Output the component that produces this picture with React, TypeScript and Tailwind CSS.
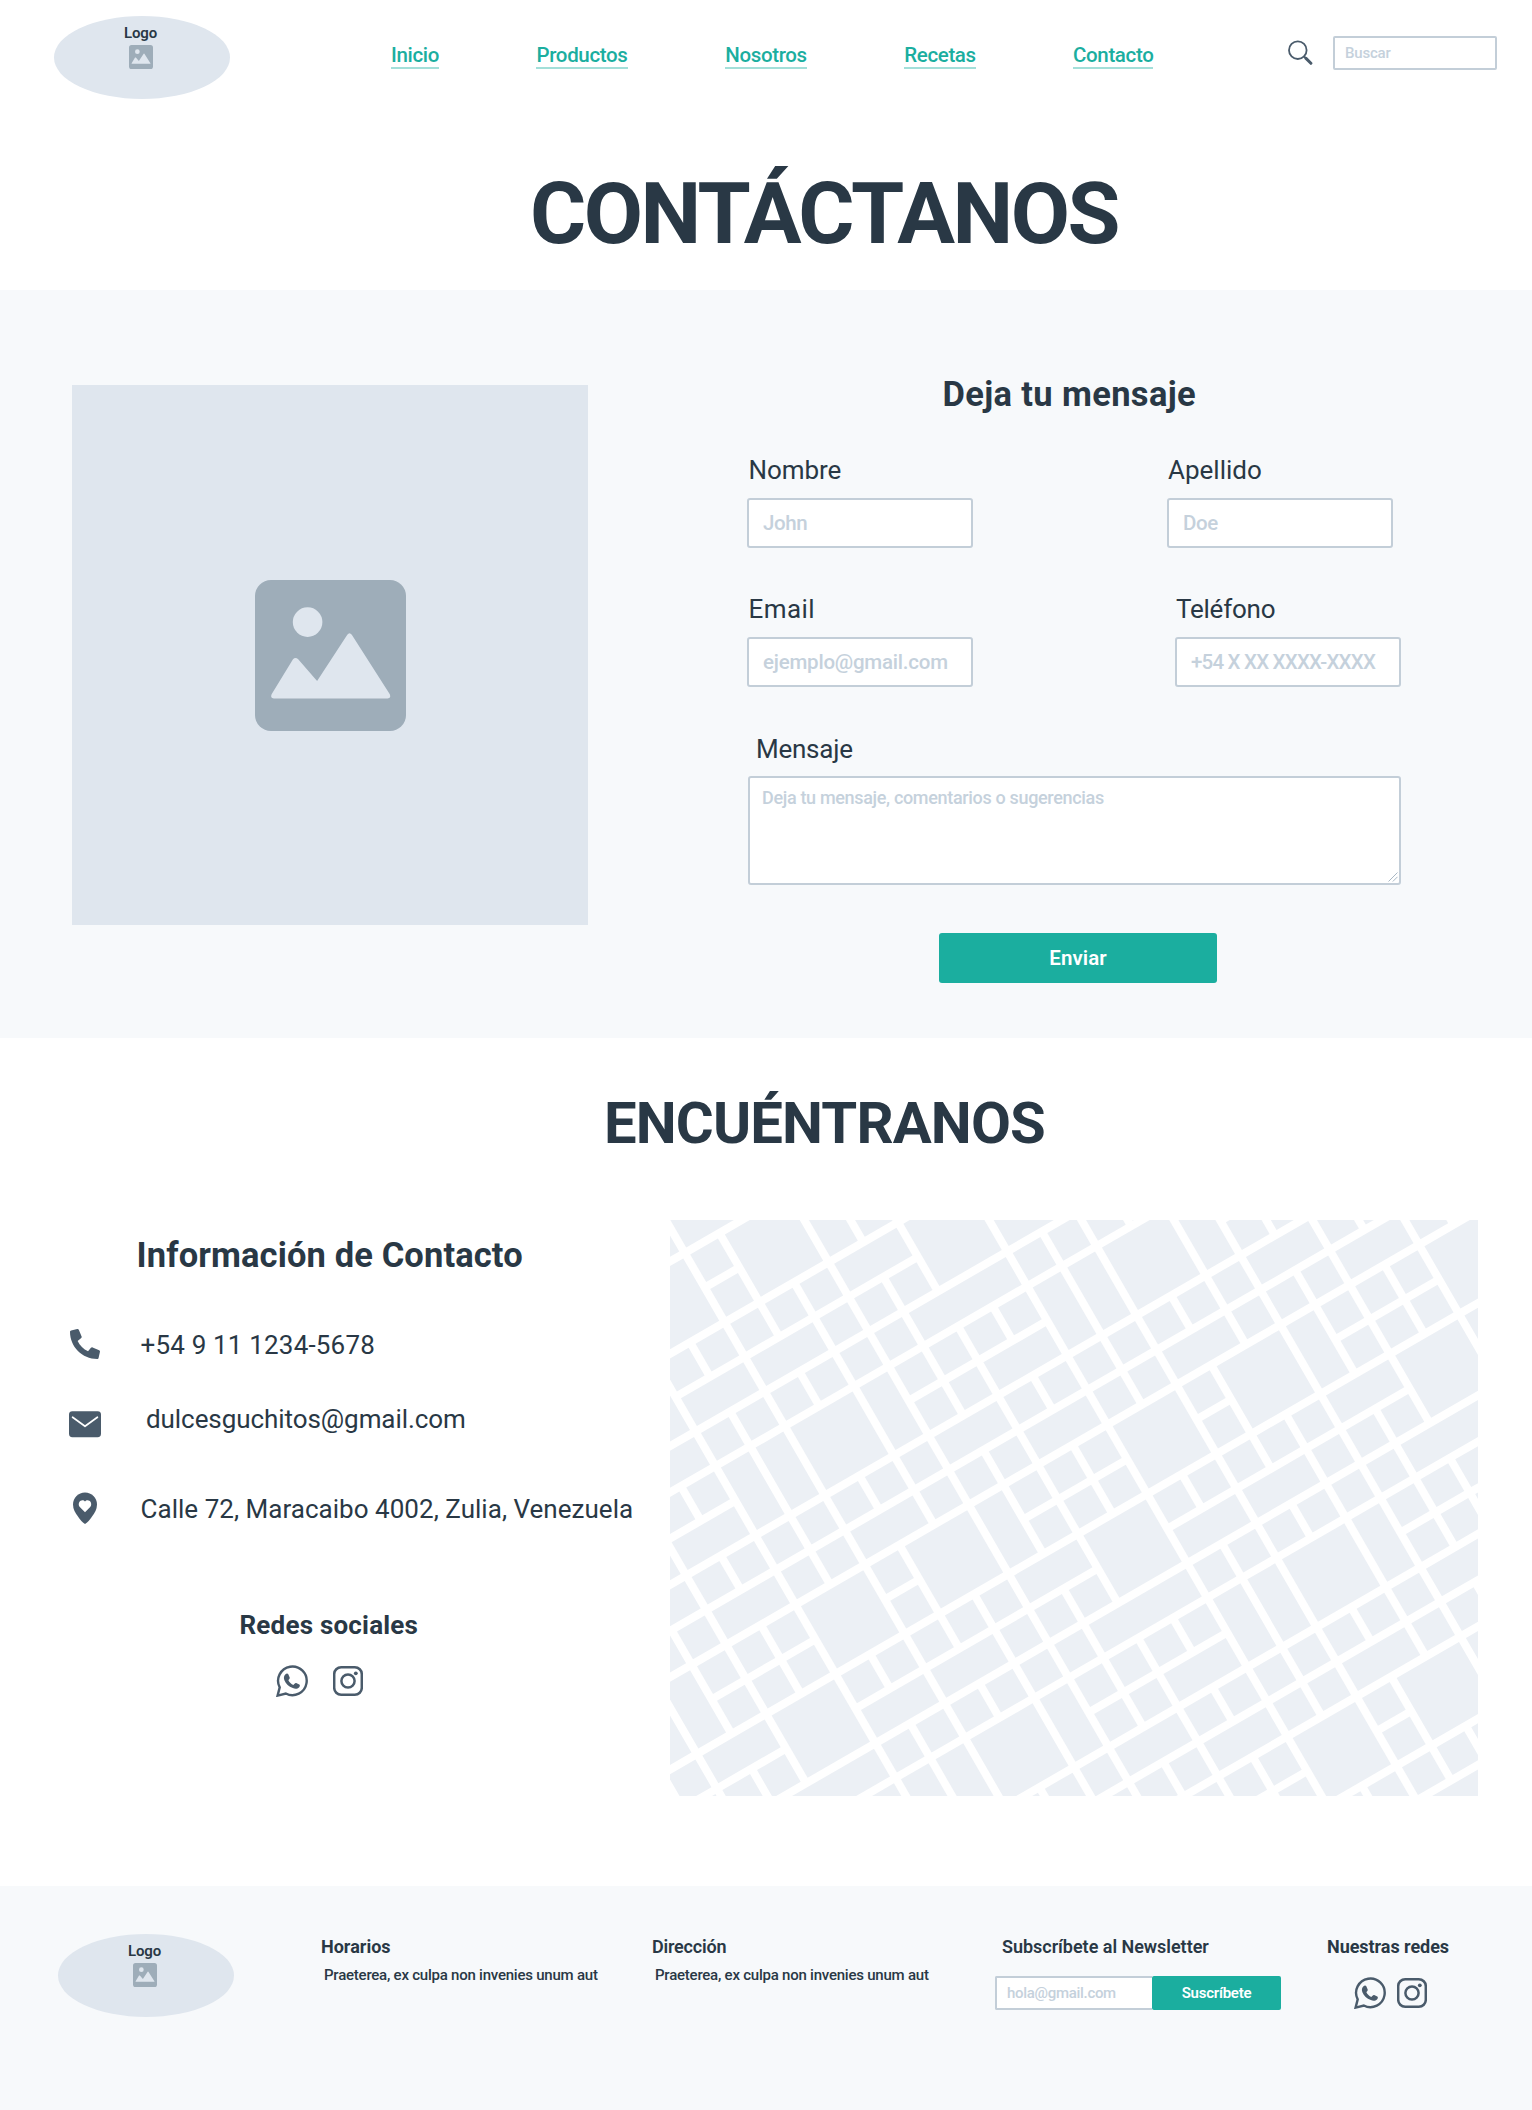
import type { ReactNode } from "react";
import { FaPhone } from "react-icons/fa";

/* ---------- Icons ---------- */

function PictureIcon({ className }: { className?: string }) {
  return (
    <svg viewBox="0 0 151 151" className={className} aria-hidden="true">
      <rect width="151" height="151" rx="16" fill="#9eadb9" />
      <circle cx="52.6" cy="42.1" r="14.8" fill="#dfe6ee" />
      <path
        d="M18.8 118.6Q15 118 16.6 114.3L38 79.3Q40.4 76.6 43.2 79.3L62.1 100.9L92.3 54.8Q94.5 51.6 96.8 54.8L134.8 114.3Q136.4 118 132.6 118.6Z"
        fill="#dfe6ee"
      />
    </svg>
  );
}

function SearchIcon() {
  return (
    <svg viewBox="0 0 25 25" className="size-[25px]" fill="none" stroke="#4a5b6b" strokeLinecap="round" aria-hidden="true">
      <circle cx="9.8" cy="10.2" r="8.8" strokeWidth="1.8" />
      <path d="M16.2 16.6l1.4 1.4" strokeWidth="2" />
      <path d="M18 18.4l4.9 4.9" strokeWidth="3" />
    </svg>
  );
}

function MailIcon() {
  return (
    <svg viewBox="0 0 32 32" className="size-8" aria-hidden="true">
      <rect y="3.2" width="32" height="26" rx="3.4" fill="#4a5b6b" />
      <path d="M3.6 9.2L16 18.3L28.4 9.2" fill="none" stroke="#fff" strokeWidth="1.7" strokeLinecap="round" strokeLinejoin="round" />
    </svg>
  );
}

function PinIcon() {
  return (
    <svg viewBox="0 0 24 32" className="h-8 w-6" aria-hidden="true">
      <path
        d="M12 .6C5.4.6 0 5.8 0 12.4c0 4.8 2.4 8.3 4.8 11.8 2.2 3.2 5 6.6 7.2 7.8 2.2-1.2 5-4.6 7.2-7.8 2.4-3.5 4.8-7 4.8-11.8C24 5.8 18.6.6 12 .6Z"
        fill="#4a5b6b"
      />
      <path
        d="M12 20.2L6.8 15C5.1 13.2 5.6 10 7.6 8.8 9.2 7.8 11 8.3 12 9.5c1-1.2 2.8-1.7 4.4-.7 2 1.2 2.5 4.4.8 6.2Z"
        fill="#fff"
      />
    </svg>
  );
}

function WhatsappIcon() {
  return (
    <svg viewBox="0 0 32 32" className="size-8" aria-hidden="true">
      <path
        d="M1.6 30.6L3.7 22.4A14.3 14.3 0 1 1 9.8 28.5Z"
        fill="none"
        stroke="#4a5b6b"
        strokeWidth="2.4"
        strokeLinejoin="miter"
      />
      <path
        d="M9.5 9.2C10.3 8.4 11.8 8.3 12.3 9.3L13.7 12.6C14 13.5 13 14.6 12.4 15.3C13.3 17.3 15.3 19.2 17.4 20C18.3 19 19.2 17.7 20.2 18.1L23.3 19.6C24.3 20.2 23.8 21.7 23 22.5C21.5 24 19 24 16.8 23.1C12.8 21.6 9.8 18.6 8.4 15.2C7.5 13 7.8 10.7 9.5 9.2Z"
        fill="#4a5b6b"
      />
    </svg>
  );
}

function InstagramIcon() {
  return (
    <svg viewBox="0 0 30 32" className="h-8 w-[30px]" fill="none" stroke="#4a5b6b" aria-hidden="true">
      <rect x="1.2" y="2.2" width="27.6" height="27.6" rx="7" strokeWidth="2.5" />
      <circle cx="15" cy="16" r="6.6" strokeWidth="2.5" />
      <circle cx="22.8" cy="8.3" r="1.9" fill="#4a5b6b" stroke="none" />
    </svg>
  );
}

/* ---------- Street map ---------- */

const TILE = 9;
const PITCH = 40;
const GAP = 8;

// Merged blocks inside one repeating tile: [column, row, columns spanned, rows spanned]
const MERGED: [number, number, number, number][] = [
  [1, 0, 2, 2],
  [7, 0, 2, 2],
  [5, 2, 2, 2],
  [0, 5, 2, 2],
  [3, 0, 1, 2],
  [2, 5, 1, 2],
  [7, 5, 1, 2],
  [8, 5, 1, 2],
  [3, 2, 2, 1],
  [0, 3, 2, 1],
  [7, 3, 2, 1],
  [4, 4, 3, 1],
  [5, 6, 2, 1],
  [3, 7, 2, 1],
  [0, 8, 2, 1],
  [5, 8, 2, 1],
];

function tileBlocks() {
  const taken = new Set<number>();
  const blocks = [...MERGED];
  MERGED.forEach(([c, r, w, h]) => {
    for (let y = r; y < r + h; y++) for (let x = c; x < c + w; x++) taken.add(y * TILE + x);
  });
  for (let i = 0; i < TILE * TILE; i++) {
    if (!taken.has(i)) blocks.push([i % TILE, Math.floor(i / TILE), 1, 1]);
  }
  return blocks;
}

const BLOCKS = tileBlocks();
const TILES: [number, number][] = [];
for (let ty = -1; ty <= 2; ty++) for (let tx = -2; tx <= 2; tx++) TILES.push([tx, ty]);

function StreetMap() {
  return (
    <svg viewBox="0 0 808 576" className="h-[576px] w-[808px]" aria-label="Mapa">
      <g transform="translate(20.2 34.4) rotate(-30)" fill="#ecf0f5">
        {TILES.map(([tx, ty]) =>
          BLOCKS.map(([c, r, w, h]) => (
            <rect
              key={`${tx}:${ty}:${c}:${r}`}
              x={(tx * TILE + c) * PITCH}
              y={(ty * TILE + r) * PITCH}
              width={w * PITCH - GAP}
              height={h * PITCH - GAP}
            />
          )),
        )}
      </g>
    </svg>
  );
}

/* ---------- Building blocks ---------- */

function Logo() {
  return (
    <div className="flex h-[83px] w-[176px] flex-col items-center rounded-[50%] bg-[#dfe6ee] pt-[10px] pr-[3px]">
      <span className="text-[15px] leading-none font-semibold tracking-[-0.15px]">Logo</span>
      <PictureIcon className="mt-1 ml-px size-6" />
    </div>
  );
}

const LINKS = [
  { label: "Inicio", width: "w-[48px]" },
  { label: "Productos", width: "w-[92px]" },
  { label: "Nosotros", width: "w-[82px]" },
  { label: "Recetas", width: "w-[72px]" },
  { label: "Contacto", width: "w-[80px]" },
];

function Field({
  label,
  placeholder,
  tracking,
  labelTracking,
}: {
  label: string;
  placeholder: string;
  tracking: string;
  labelTracking: string;
}) {
  return (
    <label className="flex w-[226px] flex-col">
      <span className={`h-[26px] text-[26px] leading-none ${labelTracking}`}>{label}</span>
      <input
        placeholder={placeholder}
        className={`mt-[15px] h-[50px] w-full rounded-[3px] border-2 border-[#c3ced8] bg-white pl-[14px] text-[20.5px] font-medium placeholder:text-[#c5d1dc] ${tracking}`}
      />
    </label>
  );
}

function ContactRow({ icon, className, children }: { icon: ReactNode; className: string; children: ReactNode }) {
  return (
    <div className={`flex items-start text-[26px] leading-none whitespace-nowrap ${className}`}>
      <div className="flex h-8 w-8 shrink-0 justify-center">{icon}</div>
      {children}
    </div>
  );
}

function FooterNote({ title, titleClass, className }: { title: string; titleClass: string; className: string }) {
  return (
    <div className={`whitespace-nowrap ${className}`}>
      <h4 className={`text-[18px] leading-none ${titleClass}`}>{title}</h4>
      <p className="mt-3 pl-[3px] text-[15px] leading-none font-medium tracking-[-0.23px]">
        Praeterea, ex culpa non invenies unum aut
      </p>
    </div>
  );
}

/* ---------- Page ---------- */

export default function App() {
  return (
    <div className="w-[1532px] bg-white font-['Roboto',sans-serif] text-[#293845]">
      <header className="h-[290px]">
        <div className="flex h-28 items-start pl-[54px]">
          <div className="mt-4">
            <Logo />
          </div>
          <nav className="mt-11 ml-[161px] flex gap-[97px]">
            {LINKS.map((l) => (
              <a
                key={l.label}
                href="#"
                className={`h-[25px] border-b-2 border-[#a3dfd9] text-center text-[20.5px] leading-[22px] font-medium tracking-[-0.35px] whitespace-nowrap text-[#1bae9f] ${l.width}`}
              >
                {l.label}
              </a>
            ))}
          </nav>
          <div className="mt-10 ml-[135px]">
            <SearchIcon />
          </div>
          <input
            placeholder="Buscar"
            className="mt-9 ml-5 h-[34px] w-[164px] rounded-[2px] border-2 border-[#c3ced8] bg-white pl-[10px] text-[15px] font-medium tracking-[-0.2px] placeholder:text-[#c5d1dc]"
          />
        </div>
        <h1 className="mt-[59px] pl-[530px] text-[86px] leading-none font-bold tracking-[-2.5px]">CONTÁCTANOS</h1>
      </header>

      <section className="flex h-[748px] items-start bg-[#f7f9fb] pl-[72px]">
        <div className="mt-[95px] flex h-[540px] w-[516px] items-center justify-center bg-[#dfe6ee]">
          <PictureIcon className="size-[151px]" />
        </div>
        <form className="mt-[87px] ml-[159px] w-[654px]">
          <h2 className="h-[35px] pl-[195.5px] text-[34.5px] leading-none font-bold tracking-[0.35px]">Deja tu mensaje</h2>
          <div className="mt-[45px] flex gap-[194px]">
            <Field label="Nombre" placeholder="John" labelTracking="pl-[1.5px] tracking-[-0.05px]" tracking="tracking-[-0.4px]" />
            <Field label="Apellido" placeholder="Doe" labelTracking="pl-px tracking-[0px]" tracking="tracking-[-0.4px]" />
          </div>
          <div className="mt-12 flex gap-[202px]">
            <Field label="Email" placeholder="ejemplo@gmail.com" labelTracking="pl-[1.5px] tracking-[0.45px]" tracking="tracking-[-0.22px]" />
            <Field label="Teléfono" placeholder="+54 X XX XXXX-XXXX" labelTracking="pl-px tracking-[-0.25px]" tracking="tracking-[-0.8px]" />
          </div>
          <label className="mt-[49px] block">
            <span className="block h-[26px] pl-[9px] text-[26px] leading-none tracking-[-0.25px]">Mensaje</span>
            <span className="relative mt-[14px] ml-px block h-[109px]">
              <textarea
                placeholder="Deja tu mensaje, comentarios o sugerencias"
                className="block h-full w-full resize-none rounded-[3px] border-2 border-[#c3ced8] bg-white px-3 pt-[10px] text-[18px] leading-[20px] font-medium tracking-[-0.33px] placeholder:text-[#c5d1dc]"
              />
              <svg viewBox="0 0 10 10" className="absolute right-[3px] bottom-[3px] size-[10px]" stroke="#a9b8c5" aria-hidden="true">
                <path d="M.5 9.5l9-9M4.8 9.5l4.7-4.7" fill="none" />
              </svg>
            </span>
          </label>
          <button
            type="button"
            className="mt-12 ml-48 h-[50px] w-[278px] rounded-[3px] bg-[#1bae9f] text-[20.5px] leading-none font-semibold tracking-[0.05px] text-white"
          >
            Enviar
          </button>
        </form>
      </section>

      <section className="h-[848px] pt-14">
        <h2 className="h-[58px] pl-[604px] text-[58px] leading-none font-bold tracking-[-0.85px]">ENCUÉNTRANOS</h2>
        <div className="mt-[68px] flex">
          <div className="w-[670px] pt-[18px]">
            <h3 className="h-[35px] pl-[136.5px] text-[34.5px] leading-none font-bold tracking-[0.12px]">
              Información de Contacto
            </h3>
            <ContactRow className="mt-[55px] ml-[69px] h-8" icon={<FaPhone className="mt-px size-[30px] -scale-x-100 text-[#4a5b6b]" />}>
              <span className="mt-1 ml-[39.5px] tracking-[0.18px]">+54 9 11 1234-5678</span>
            </ContactRow>
            <ContactRow className="mt-12 ml-[69px] h-8" icon={<MailIcon />}>
              <span className="-mt-0.5 ml-[45px] tracking-[-0.07px]">dulcesguchitos@gmail.com</span>
            </ContactRow>
            <ContactRow className="mt-[52px] ml-[69px] h-8" icon={<PinIcon />}>
              <span className="mt-1 ml-[39.5px] tracking-[0.03px]">Calle 72, Maracaibo 4002, Zulia, Venezuela</span>
            </ContactRow>
            <h4 className="mt-[88px] h-[26px] pl-[239.5px] text-[26px] leading-none font-bold tracking-[0.2px]">
              Redes sociales
            </h4>
            <div className="mt-[27px] flex gap-[25px] pl-[276px]">
              <WhatsappIcon />
              <InstagramIcon />
            </div>
          </div>
          <StreetMap />
        </div>
      </section>

      <footer className="flex h-[224px] items-start bg-[#f7f9fb] pl-[58px]">
        <div className="mt-12">
          <Logo />
        </div>
        <FooterNote title="Horarios" titleClass="font-bold tracking-[0px]" className="mt-[52px] ml-[87px] w-[331px]" />
        <FooterNote title="Dirección" titleClass="font-semibold tracking-[-0.2px]" className="mt-[52px] w-[343px]" />
        <div className="mt-[52px] w-[286px]">
          <h4 className="pl-[7px] text-[18px] leading-none font-semibold tracking-[-0.03px] whitespace-nowrap">
            Subscríbete al Newsletter
          </h4>
          <div className="mt-5 flex">
            <input
              placeholder="hola@gmail.com"
              className="h-[34px] w-[157px] rounded-l-[2px] border-2 border-r-0 border-[#c3ced8] bg-white pl-[10px] text-[15px] font-medium tracking-[-0.3px] placeholder:text-[#c5d1dc]"
            />
            <button type="button" className="h-[34px] w-[129px] rounded-[2px] bg-[#1bae9f] text-[15px] leading-none font-semibold tracking-[-0.25px] text-white">
              Suscríbete
            </button>
          </div>
        </div>
        <div className="mt-[52px] ml-[46px] whitespace-nowrap">
          <h4 className="text-[18px] leading-none font-bold tracking-[-0.05px]">Nuestras redes</h4>
          <div className="mt-[21px] flex gap-[11px] pl-[27px]">
            <WhatsappIcon />
            <InstagramIcon />
          </div>
        </div>
      </footer>
    </div>
  );
}
